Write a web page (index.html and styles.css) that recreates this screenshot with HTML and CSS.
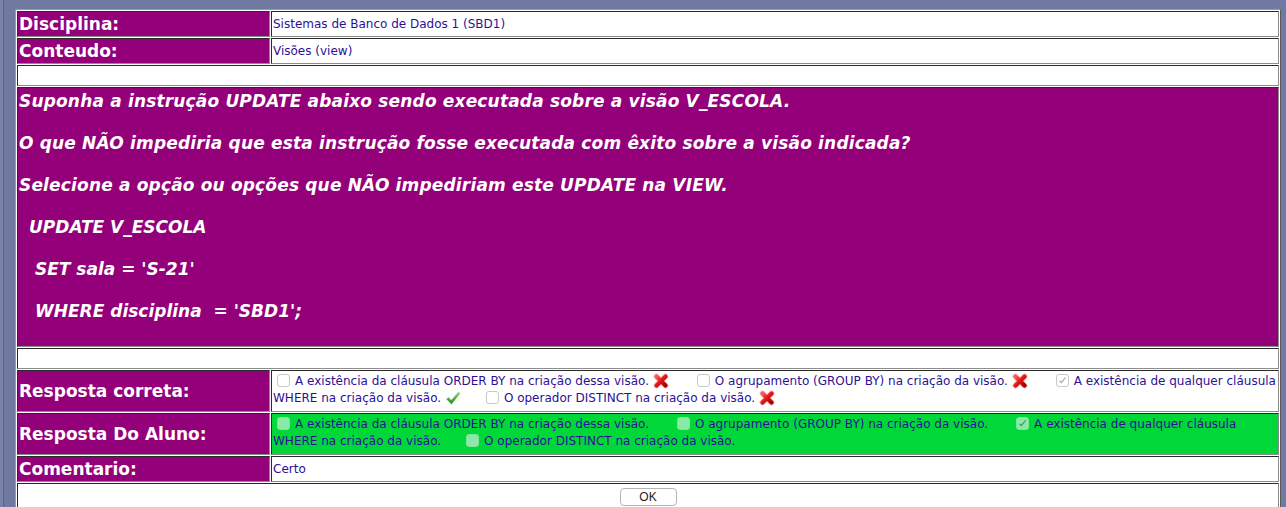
FILE: index.html
```html
<!DOCTYPE html>
<html lang="pt">
<head>
<meta charset="utf-8">
<title>Resposta</title>
<link rel="stylesheet" href="styles.css">
</head>
<body>
<svg width="0" height="0" class="defs" aria-hidden="true">
  <defs>
    <linearGradient id="gx" x1="0" y1="0" x2="1" y2="1">
      <stop offset="0" stop-color="#ff5a5a"/>
      <stop offset="0.5" stop-color="#e01616"/>
      <stop offset="1" stop-color="#a80000"/>
    </linearGradient>
    <linearGradient id="gc" x1="0" y1="0" x2="0" y2="1">
      <stop offset="0" stop-color="#86d86a"/>
      <stop offset="1" stop-color="#1c8a24"/>
    </linearGradient>
    <symbol id="ix" viewBox="0 0 16 16">
      <path d="M3.5 3.5 L12.5 12.5 M12.5 3.5 L3.5 12.5" stroke="#f3c4c4" stroke-width="6" stroke-linecap="round"/>
      <path d="M3.5 3.5 L12.5 12.5 M12.5 3.5 L3.5 12.5" stroke="url(#gx)" stroke-width="4.2" stroke-linecap="round"/>
    </symbol>
    <symbol id="ic" viewBox="0 0 16 16">
      <path d="M1.2 9.2 L3.6 7 L6.2 9.9 L13.4 1.8 L15.3 3.4 L6.6 14.6 Z" fill="url(#gc)" stroke="#d6efd0" stroke-width="0.6" stroke-linejoin="round"/>
    </symbol>
  </defs>
</svg>
<table class="frm">
  <tr>
    <td class="lbl">Disciplina:</td>
    <td class="val">Sistemas de Banco de Dados 1 (SBD1)</td>
  </tr>
  <tr>
    <td class="lbl">Conteudo:</td>
    <td class="val">Visões (view)</td>
  </tr>
  <tr>
    <td class="blank" colspan="2">&nbsp;</td>
  </tr>
  <tr>
    <td class="question" colspan="2">
      <p class="prose">Suponha a instrução UPDATE abaixo sendo executada sobre a visão V_ESCOLA.</p>
      <p class="prose">O que NÃO impediria que esta instrução fosse executada com êxito sobre a visão indicada?</p>
      <p class="prose">Selecione a opção ou opções que NÃO impediriam este UPDATE na VIEW.</p>
      <p class="code1">UPDATE V_ESCOLA</p>
      <p class="code2">SET sala = 'S-21'</p>
      <p class="code2">WHERE disciplina&nbsp; = 'SBD1';</p>
    </td>
  </tr>
  <tr>
    <td class="blank" colspan="2">&nbsp;</td>
  </tr>
  <tr>
    <td class="lbl">Resposta correta:</td>
    <td class="val opts"><span class="cb"></span>A existência da cláusula ORDER BY na criação dessa visão. <svg class="ico"><use href="#ix"/></svg><span class="gap"></span><span class="cb"></span>O agrupamento (GROUP BY) na criação da visão. <svg class="ico"><use href="#ix"/></svg><span class="gap"></span><span class="cb on"></span>A existência de qualquer cláusula WHERE na criação da visão. <svg class="ico"><use href="#ic"/></svg><span class="gap narrow"></span><span class="cb"></span>O operador DISTINCT na criação da visão. <svg class="ico"><use href="#ix"/></svg></td>
  </tr>
  <tr>
    <td class="lbl">Resposta Do Aluno:</td>
    <td class="val opts green"><span class="cb"></span>A existência da cláusula ORDER BY na criação dessa visão.<span class="gap"></span><span class="cb"></span>O agrupamento (GROUP BY) na criação da visão.<span class="gap"></span><span class="cb on"></span>A existência de qualquer cláusula WHERE na criação da visão.<span class="gap narrow"></span><span class="cb"></span>O operador DISTINCT na criação da visão.</td>
  </tr>
  <tr>
    <td class="lbl">Comentario:</td>
    <td class="val">Certo</td>
  </tr>
  <tr>
    <td class="btnrow" colspan="2"><button class="ok" type="button">OK</button></td>
  </tr>
</table>
</body>
</html>
```
FILE: styles.css
```css
html, body {
  margin: 0;
  height: 100%;
  overflow: hidden;
}

body {
  padding: 9px 0 0 15px;
  box-sizing: border-box;
  background: linear-gradient(to right, #7b83aa 0, #7b83aa 3px, #596189 3px, #596189 4px, #6f79a1 4px);
  font-family: "DejaVu Sans", Verdana, sans-serif;
}

.defs {
  position: absolute;
  width: 0;
  height: 0;
}

.frm {
  width: 1266px;
  table-layout: fixed;
  border-collapse: separate;
  border-spacing: 1px;
  border: 1px solid;
  border-color: #9c9c9c #5a5a5a #5a5a5a #9c9c9c;
  background: #fff;
}

.frm td {
  border: 1px solid;
  border-color: #2a2a2a #8c8c8c #8c8c8c #2a2a2a;
  padding: 1px;
  vertical-align: middle;
}

.lbl {
  width: 249px;
  background: #930079;
  color: #fff;
  font-weight: bold;
  font-size: 17px;
  line-height: 22px;
  white-space: nowrap;
}

.val {
  background: #fff;
  color: #2d1096;
  font-size: 12px;
  line-height: 15px;
}

.blank {
  height: 17px;
  font-size: 12px;
  line-height: 15px;
  background: #fff;
}

.question {
  background: #930079;
  color: #fff;
  font-weight: bold;
  font-style: italic;
  font-size: 17px;
  line-height: 22px;
  padding: 2px 1px 4px 1px !important;
}

.question p {
  margin: 0 0 20px 0;
}

.question .prose {
  letter-spacing: 0.17px;
}

.question .code1 {
  padding-left: 10px;
}

.question .code2 {
  padding-left: 16px;
}

.opts {
  line-height: 17px;
  padding: 2px 1px 4px 1px !important;
}

.opts.green {
  background: #00d83a;
}

.cb {
  display: inline-block;
  position: relative;
  width: 11px;
  height: 11px;
  border: 1px solid #c9c9c9;
  border-radius: 3px;
  background: #fff;
  margin: 0 5px 0 4px;
  vertical-align: -2px;
}

.green .cb {
  background: #8ae9a6;
  border-color: #80e29e;
}

.cb.on::after {
  content: "";
  position: absolute;
  left: 4px;
  top: 1px;
  width: 2px;
  height: 6px;
  border: solid #9a9a9a;
  border-width: 0 1.5px 1.5px 0;
  transform: rotate(40deg);
}

.green .cb.on::after {
  border-color: #3f8a52;
}

.ico {
  display: inline-block;
  width: 16px;
  height: 16px;
  vertical-align: -4px;
}

.gap {
  display: inline-block;
  width: 24px;
}

.gap.narrow {
  width: 21px;
}

.btnrow {
  text-align: center;
  background: #fff;
  padding: 2px 1px 6px 1px !important;
}

.ok {
  width: 57px;
  height: 18px;
  padding: 0;
  font-family: "Liberation Sans", Arial, sans-serif;
  font-size: 12px;
  color: #222;
  background: #fff;
  border: 1px solid #b4b4b4;
  border-radius: 4px;
}
```
